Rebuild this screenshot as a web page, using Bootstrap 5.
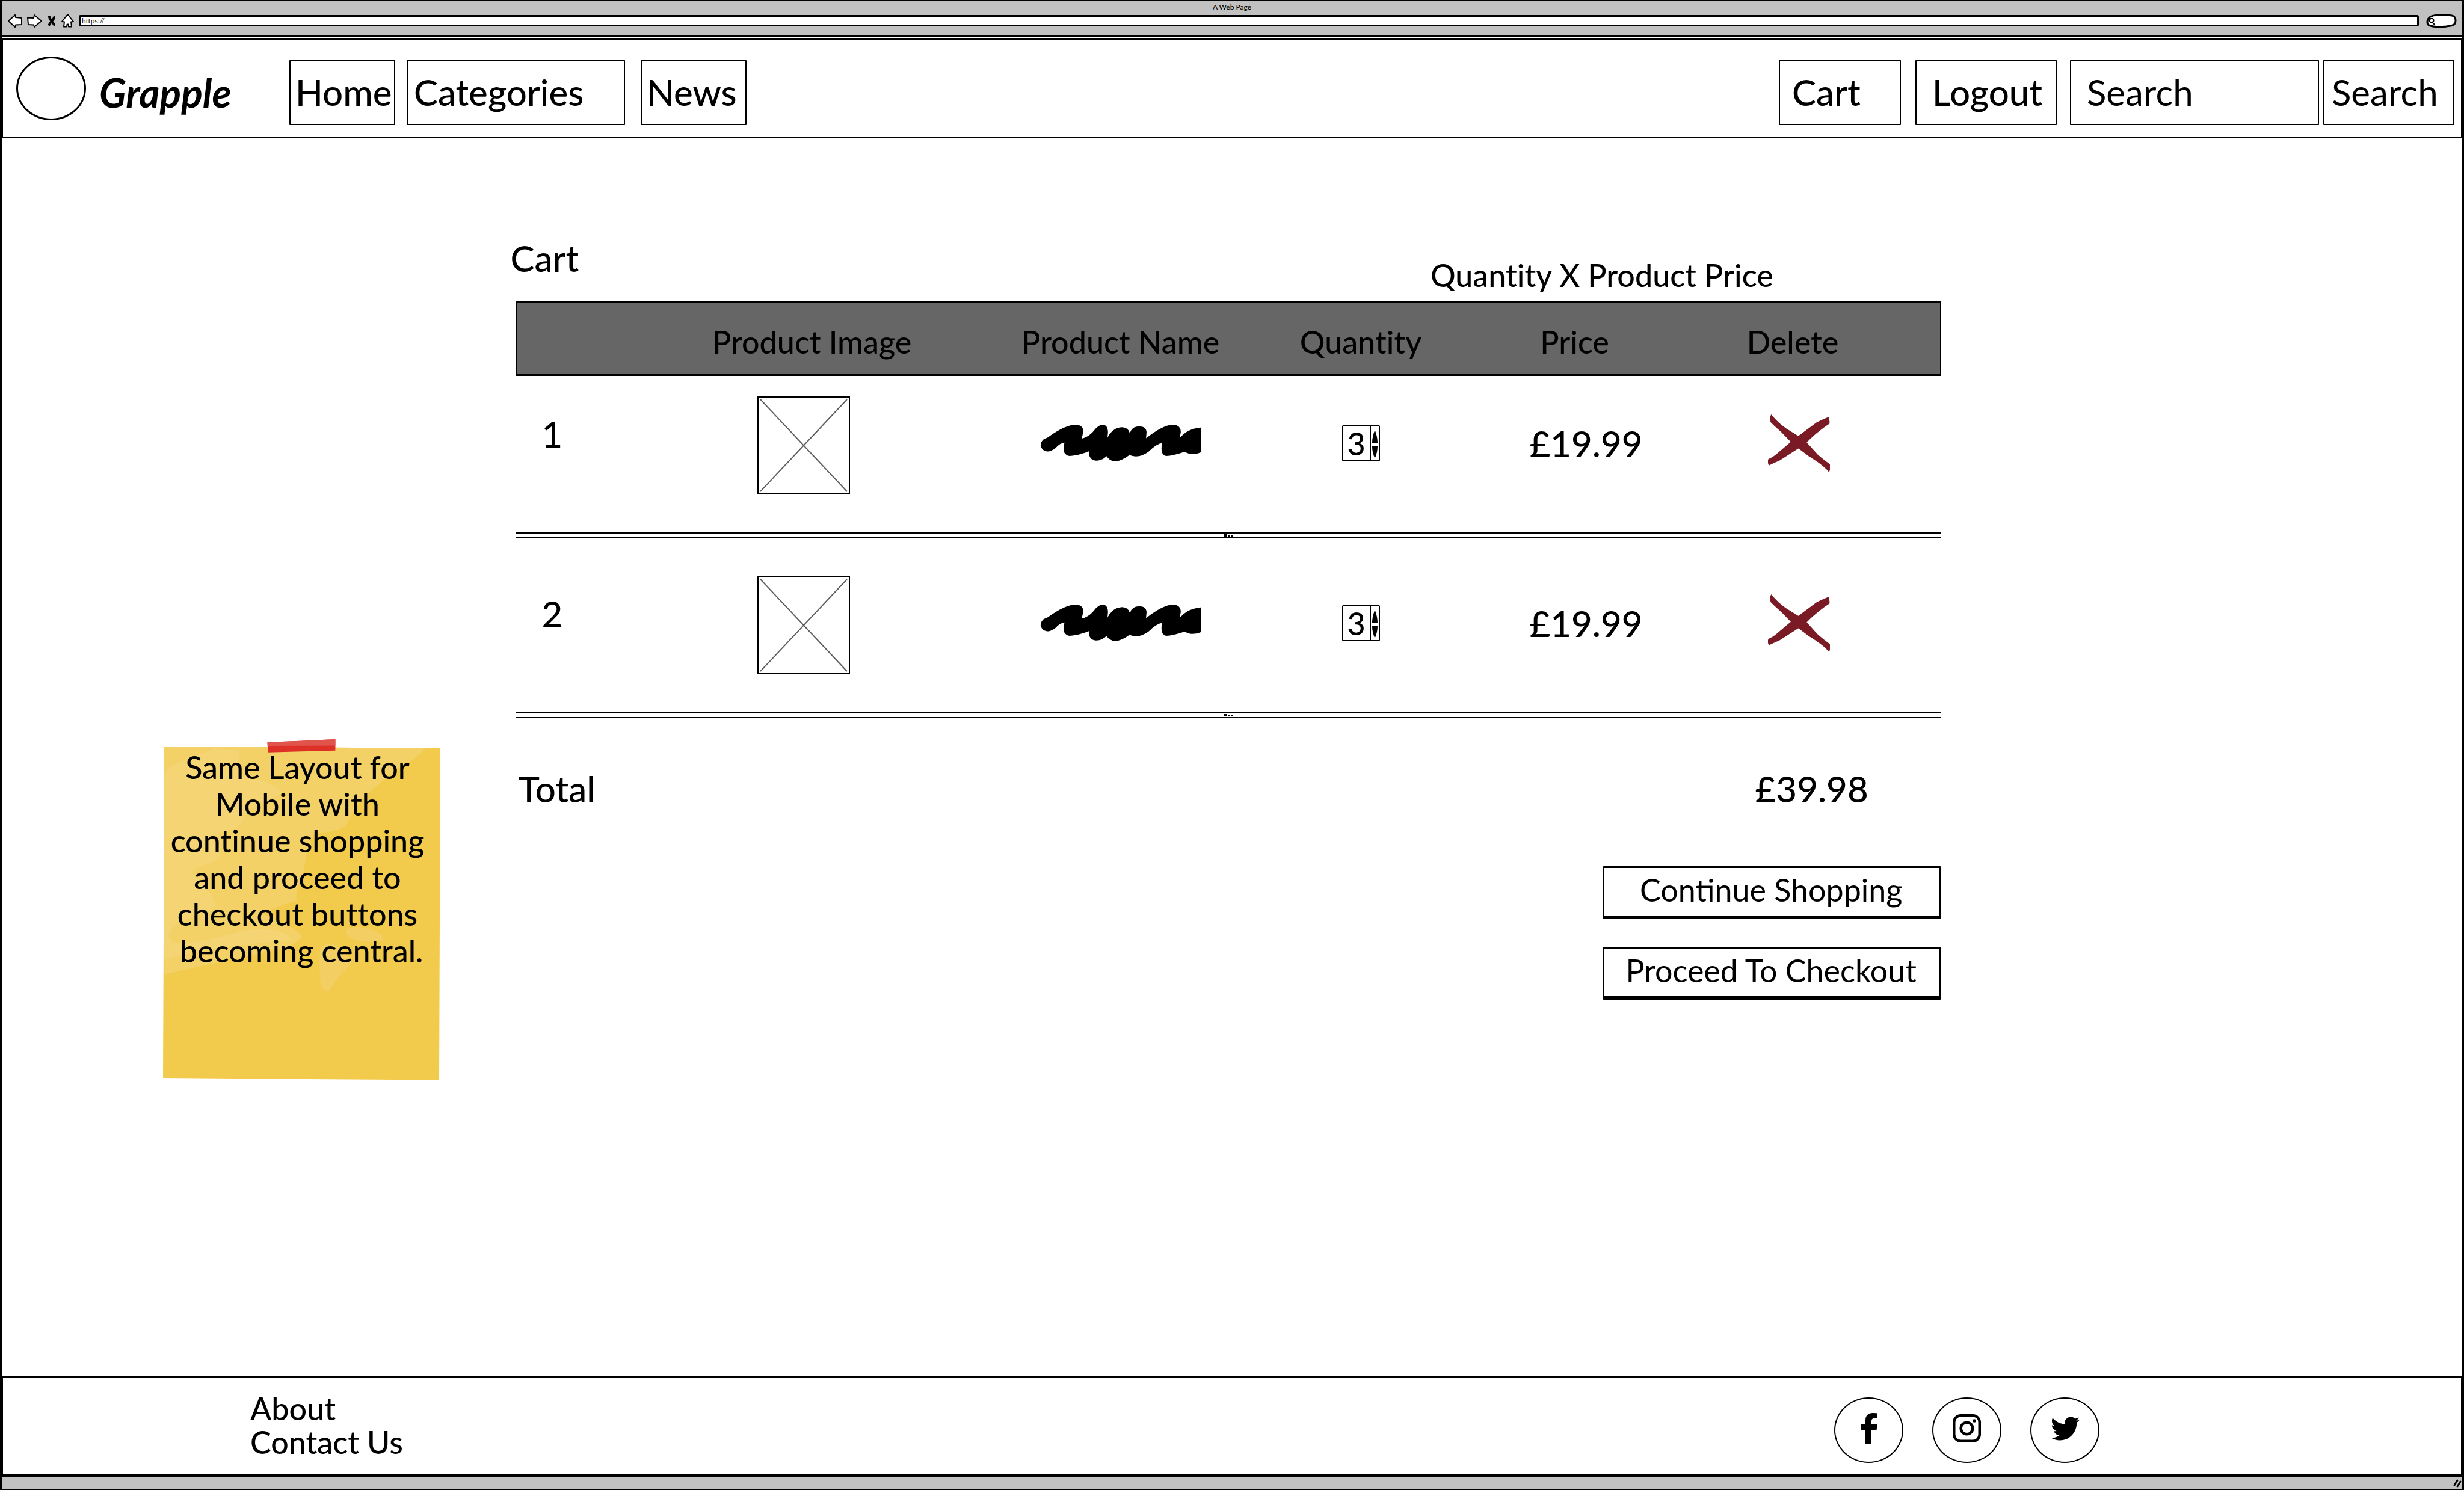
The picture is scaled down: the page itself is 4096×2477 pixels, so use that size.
<!DOCTYPE html>
<html lang="en">
<head>
<meta charset="utf-8">
<meta name="viewport" content="width=device-width, initial-scale=1">
<title>A Web Page</title>
<link href="https://cdn.jsdelivr.net/npm/bootstrap@5.3.0/dist/css/bootstrap.min.css" rel="stylesheet">
<style>
  :root { --ink: #000; --bar: #c1c1c1; --slate: #666; }
  body { font-family: Lato, "Open Sans", sans-serif; font-weight: 500; font-size: 52px; line-height: 60px; font-variant-ligatures: none; color: var(--ink); background: #fff; }
  a, a:hover { color: inherit; text-decoration: none; }
  .text-lg60 { font-size: 60px; line-height: 72px; font-weight: 500; }
  .frame { border: 3px solid var(--ink); border-width: 2px 3px; }

  /* browser window */
  .chrome-bar { background: var(--bar); border-bottom: 3px solid var(--ink); height: 60px; }
  .chrome-title { font-size: 12px; line-height: 18px; padding-top: 1px; }
  .chrome-tools { padding: 2px 8px 0 10px; }
  .tool-btn { padding: 0; border: 0; background: none; line-height: 0; }
  .url-box { height: 19px; border: 3px solid var(--ink); border-radius: 3px; padding: 0 2px; font-size: 12px; line-height: 13px; background: #fff; min-width: 0; }
  .status-bar { background: var(--bar); border-top: 4px solid var(--ink); height: 23px; }

  /* site header */
  .site-nav { border: 2px solid var(--ink); margin-top: 2px; padding: 33px 11px 19px 22px; }
  .brand { min-width: 454px; gap: 22px; padding: 0; }
  .brand-name { font-size: 66px; font-weight: 700; font-style: italic; }
  .brand-disc { width: 116px; height: 106px; margin: -5px 0 8px; border: 3px solid var(--ink); border-radius: 50%; }
  .nav-box { display: block; border: 2px solid var(--ink); border-radius: 2px; height: 109px; padding: 16px 10px 17px; background: #fff; color: var(--ink); text-align: left; }
  .box-sm { width: 176px; }
  .box-sm, .box-go { padding-left: 8px; padding-right: 0; }
  .box-cat { width: 363px; margin: 0 26px 0 19px; }
  .box-cart { width: 203px; padding-left: 20px; margin-right: 24px; }
  .box-logout { width: 235px; padding-left: 26px; margin-right: 22px; }
  .box-query { width: 414px; padding-left: 26px; margin-right: 7px; }
  .box-go { width: 218px; padding-left: 12px; }
  .box-query::placeholder { color: var(--ink); opacity: 1; }

  /* cart */
  .side-col { width: 20.87%; padding: 1000px 0 0 268px; }
  .cart-col { width: 57.95%; padding-top: 164px; }
  .cart-title { margin: 0 0 36px -8px; }
  .formula { margin: 0 279px 14px 0; }
  .cart-table { width: 100%; table-layout: fixed; border-collapse: separate; border-spacing: 0; }
  .cart-table th { font-weight: 500; text-align: center; background: var(--slate); border: solid var(--ink); border-width: 3px 0; padding: 34px 0 24px; }
  .cart-table th:first-child { border-left-width: 2px; }
  .cart-table th:last-child { border-right-width: 2px; padding-right: 98px; }
  .cart-table th:nth-child(2) { padding-left: 12px; }
  .item-row td { text-align: center; vertical-align: middle; padding: 63px 0 71px; }
  .item-row td:nth-child(2) { padding-bottom: 63px; }
  .first-row td { padding-top: 34px; }
  .item-row td:first-child { text-align: left; padding-left: 44px; }
  .item-row td:first-child div { padding-bottom: 32px; }
  .item-row td:nth-child(5) { padding-left: 38px; }
  .item-row td:last-child { padding-right: 78px; }
  .item-row svg, .item-row .tool-btn { display: block; margin: 0 auto; }
  .item-row .photo { margin-right: 190px; }
  .rule-row td { border: solid var(--ink); border-width: 2px 0; height: 10px; padding: 0; line-height: 0; }
  .rule-row svg { display: block; margin: 0 auto; }
  .stepper { display: flex; width: 63px; height: 60px; margin: 0 auto; border: 2px solid var(--ink); border-radius: 2px; }
  .stepper input { width: 46px; border: 0; border-right: 2px solid var(--ink); padding: 0; text-align: center; font-size: 52px; line-height: 50px; font-weight: 500; color: var(--ink); appearance: textfield; -moz-appearance: textfield; background: #fff; }
  .stepper input::-webkit-inner-spin-button { appearance: none; -webkit-appearance: none; margin: 0; }
  .total-row { padding: 81px 121px 0 5px; }
  .action-col { margin-top: 93px; gap: 46px; }
  .sketch-btn { width: 563px; height: 88px; padding: 6px 0 13px; background: #fff; color: var(--ink); border: solid var(--ink); border-width: 3px 4px 6px 2px; border-radius: 2px; }

  /* sticky note */
  .note { position: relative; width: 461px; height: 567px; padding: 16px 0 0; margin-right: -30px; text-align: center; line-height: 61px; }
  .note svg { position: absolute; inset: 0; width: 100%; height: 100%; }
  .note p { position: relative; margin: 0; padding-right: 14px; }

  /* footer */
  .site-foot { border: 2px solid var(--ink); padding: 23px 601px 18px 411px; }
  .foot-links { line-height: 56px; }
  .social { gap: 48px; padding-top: 10px; }
  .social a { width: 115px; height: 109px; border: 2px solid var(--ink); border-radius: 50%; padding-bottom: 6px; }
</style>
</head>
<body>
<div class="frame d-flex flex-column min-vh-100">

  <div class="chrome-bar d-flex flex-column">
    <div class="chrome-title text-center">A Web Page</div>
    <div class="chrome-tools d-flex align-items-center">
      <button type="button" class="tool-btn me-2" aria-label="Back"><svg width="24" height="22" viewBox="0 0 24 22" fill="#fff" stroke="#000" stroke-width="2" stroke-linejoin="round"><path d="M1 11 12 1l1 4 10 1v11l-10 .5L12 21z"/></svg></button>
      <button type="button" class="tool-btn me-2" aria-label="Forward"><svg width="25" height="22" viewBox="0 0 25 22" fill="#fff" stroke="#000" stroke-width="2" stroke-linejoin="round"><path d="M24 11 12 1l-1 5-10-.5L2 17l9 .5 1 3.500z"/></svg></button>
      <button type="button" class="tool-btn me-2" aria-label="Stop"><svg width="16" height="18" viewBox="0 0 16 18" fill="none" stroke="#000" stroke-width="4" stroke-linecap="round"><path d="M4 2c1 5 5 8 8 13M12 3C11 8 6 10 4 15"/></svg></button>
      <button type="button" class="tool-btn me-2" aria-label="Home"><svg width="21" height="23" viewBox="0 0 21 23" fill="#fff" stroke="#000" stroke-width="2" stroke-linejoin="round"><path d="M10.500 1 1 13l4 .5L4 21.500h5l.5-4 2 0 .5 4h5L16 13.500l4-.5z"/></svg></button>
      <input class="url-box flex-grow-1" type="text" value="https://" aria-label="Address">
      <svg class="ms-2" width="56" height="23" viewBox="0 0 56 23" fill="#fff" stroke="#000" stroke-width="3"><path d="M13 4c8-3 24-3 34-1 6 1 7 8 5 13-2 4-7 4-14 5-8 1-20 1-27-1C4 18 4 8 13 4z"/><path d="M12 8c5-1 6 5 2 6-5 1-6-5-2-6zM14 14l4 4" stroke-width="2"/></svg>
    </div>
  </div>

  <nav class="site-nav d-flex align-items-start text-lg60" aria-label="Main">
    <a href="#" class="brand d-flex align-items-center">
      <span class="brand-disc"></span>
      <span class="brand-name">Grapple</span>
    </a>
    <a href="#" class="nav-box box-sm">Home</a>
    <a href="#" class="nav-box box-cat">Categories</a>
    <a href="#" class="nav-box box-sm">News</a>
    <a href="#" class="nav-box box-cart ms-auto">Cart</a>
    <a href="#" class="nav-box box-logout">Logout</a>
    <form class="d-flex">
      <input class="nav-box box-query" type="text" placeholder="Search" aria-label="Search">
      <button class="nav-box box-go" type="button">Search</button>
    </form>
  </nav>

  <main class="d-flex flex-grow-1">
    <aside class="side-col">
      <div class="note">
        <svg viewBox="53 46 1421 1458" preserveAspectRatio="none" aria-hidden="true">
          <path fill="#f2cb4d" d="M60 77 1474 84 1468 1503 53 1494z"/>
          <path fill="#f3d167" d="M60 77 1398 84C1330 150 1270 150 1200 210C1100 280 1050 310 1000 400C970 440 890 445 830 445C780 510 790 560 770 620C730 700 730 720 742 738C680 745 640 765 560 790C640 830 740 850 764 888C750 910 730 915 720 925C600 960 200 1020 60 1053z"/>
          <path fill="#f5d474" d="M60 185C150 120 280 110 308 84L440 94C450 150 440 190 480 205C570 225 640 240 660 275C600 310 500 320 480 370C440 430 400 440 330 445C340 480 355 510 340 560C280 580 200 590 205 620C260 670 310 710 320 755C280 800 90 810 82 890C90 935 200 915 300 900C450 870 520 840 640 865C690 880 700 890 710 905C450 920 150 960 58 990z"/>
          <path fill="#f3cf63" d="M990 858C1060 835 1150 860 1180 890C1190 920 1110 915 1040 905C1000 890 985 880 990 858zM862 940C890 905 960 915 1020 1000C980 1040 940 1070 905 1120C880 1130 858 1110 857 1060C858 1010 850 980 862 940z"/>
          <path fill="#dd3128" d="M588 59 936 46V94L592 102z"/>
          <path fill="#e0544b" d="M588 59 936 46V73L588 74z"/>
        </svg>
        <p>Same Layout for<br>Mobile with<br>continue shopping<br>and proceed to<br>checkout buttons<br>&nbsp;becoming central.</p>
      </div>
    </aside>

    <section class="cart-col d-flex flex-column">
      <div class="d-flex justify-content-between align-items-end">
        <h1 class="cart-title text-lg60">Cart</h1>
        <p class="formula">Quantity X Product Price</p>
      </div>

      <table class="cart-table">
        <colgroup>
          <col style="width:9.600%"><col style="width:21.900%"><col style="width:21.900%"><col style="width:11.800%"><col style="width:18.200%"><col>
        </colgroup>
        <thead>
          <tr><th aria-label="Item"></th><th>Product Image</th><th>Product Name</th><th>Quantity</th><th>Price</th><th>Delete</th></tr>
        </thead>
        <tbody>
          <tr class="item-row first-row text-lg60">
            <td><div>1</div></td>
            <td><svg class="photo" width="154" height="163" viewBox="0 0 154 163" fill="none"><path d="M5 5 149 158M149 5 5 158" stroke="#5c5c5c" stroke-width="2"/><rect x="1" y="1" width="152" height="161" stroke="#000" stroke-width="2"/></svg></td>
            <td><svg class="scribble" width="267" height="61" viewBox="1113 966 329 182" preserveAspectRatio="none" role="img" aria-label="Product name"><path id="scrawl" d="M1114 1068Q1114 1040 1128 1030Q1165 966 1186 966Q1203 968 1201 1005Q1200 1020 1198 1035Q1213 1030 1227 985Q1235 966 1241 967Q1252 967 1252 1005L1251 1030Q1262 980 1281 979Q1294 980 1297 1010Q1300 975 1316 974Q1331 975 1331 1005L1330 1033Q1365 967 1385 966Q1402 968 1401 1005L1399 1032Q1415 985 1442 980V1103Q1425 1122 1409 1100Q1385 1120 1371 1121Q1358 1115 1363 1057Q1352 1060 1335 1100Q1315 1135 1296 1117Q1280 1145 1267 1148Q1255 1145 1249 1122Q1240 1145 1227 1144Q1212 1140 1213 1098Q1190 1120 1173 1121Q1156 1115 1163 1055Q1155 1055 1143 1085Q1133 1100 1127 1099Q1116 1095 1114 1068Z"/></svg></td>
            <td><span class="stepper"><input type="number" value="3" aria-label="Quantity of item 1"><svg width="13" height="56" viewBox="0 0 13 56"><path d="M6.500 6C9 12 11 20 11 27H2C2 20 4 12 6.500 6zM2 33h9c0 8-2 14-4.500 20C4 47 2 41 2 33z"/></svg></span></td>
            <td>£19.99</td>
            <td><button type="button" class="tool-btn" aria-label="Delete item 1"><svg width="103" height="96" viewBox="1113 875 136 296" preserveAspectRatio="none" fill="#7a1a24"><path id="cross-a" d="M1120 875Q1136 920 1152 945L1193 1005L1222 1080Q1234 1105 1249 1130Q1251 1150 1247 1171Q1235 1135 1203 1090L1169 1030L1142 965Q1125 930 1119 915Q1115 895 1120 875z"/><path id="cross-b" d="M1246 888Q1249 905 1248 922Q1217 970 1194 1028L1138 1112Q1125 1125 1115 1136Q1111 1120 1114 1103Q1122 1096 1129 1083L1169 1004L1220 915Q1235 898 1246 888z"/></svg></button></td>
          </tr>
          <tr class="rule-row"><td colspan="6"><svg width="14" height="4"><path d="M0 0h4v4H0zM6 1h3v3H6zM11 1h3v3h-3z"/></svg></td></tr>
          <tr class="item-row text-lg60">
            <td><div>2</div></td>
            <td><svg class="photo" width="154" height="163" viewBox="0 0 154 163" fill="none"><path d="M5 5 149 158M149 5 5 158" stroke="#5c5c5c" stroke-width="2"/><rect x="1" y="1" width="152" height="161" stroke="#000" stroke-width="2"/></svg></td>
            <td><svg class="scribble" width="267" height="61" viewBox="1113 966 329 182" preserveAspectRatio="none" role="img" aria-label="Product name"><use href="#scrawl"/></svg></td>
            <td><span class="stepper"><input type="number" value="3" aria-label="Quantity of item 2"><svg width="13" height="56" viewBox="0 0 13 56"><path d="M6.500 6C9 12 11 20 11 27H2C2 20 4 12 6.500 6zM2 33h9c0 8-2 14-4.500 20C4 47 2 41 2 33z"/></svg></span></td>
            <td>£19.99</td>
            <td><button type="button" class="tool-btn" aria-label="Delete item 2"><svg width="103" height="96" viewBox="1113 875 136 296" preserveAspectRatio="none" fill="#7a1a24"><use href="#cross-a"/><use href="#cross-b"/></svg></button></td>
          </tr>
          <tr class="rule-row"><td colspan="6"><svg width="14" height="4"><path d="M0 0h4v4H0zM6 1h3v3H6zM11 1h3v3h-3z"/></svg></td></tr>
        </tbody>
      </table>

      <div class="total-row d-flex justify-content-between text-lg60">
        <span>Total</span><span>£39.98</span>
      </div>
      <div class="action-col d-flex flex-column align-items-end">
        <button type="button" class="sketch-btn">Continue Shopping</button>
        <button type="button" class="sketch-btn">Proceed To Checkout</button>
      </div>
    </section>
  </main>

  <footer class="site-foot d-flex justify-content-between align-items-start">
    <div class="foot-links d-flex flex-column">
      <a href="#">About</a>
      <a href="#">Contact Us</a>
    </div>
    <div class="social d-flex">
      <a href="#" class="d-flex align-items-center justify-content-center" aria-label="Facebook"><svg width="28" height="51" viewBox="0 0 28 51"><path d="M28 .5V9h-5c-4 0-5 2-5 5v5h10l-1.500 9H18v23H8V28H0v-9h8v-7C8 4 13 0 20 0c4 0 6 .2 8 .5z"/></svg></a>
      <a href="#" class="d-flex align-items-center justify-content-center" aria-label="Instagram"><svg width="47" height="47" viewBox="0 0 47 47" fill="none" stroke="#000" stroke-width="4.500"><rect x="2.250" y="2.250" width="42.500" height="42.500" rx="11"/><circle cx="23.500" cy="23.500" r="9.800"/><circle cx="36" cy="11" r="2.800" fill="#000" stroke="none"/></svg></a>
      <a href="#" class="d-flex align-items-center justify-content-center" aria-label="Twitter"><svg width="48" height="40" viewBox="0 2 24 20"><path d="M23.950 4.570a10 10 0 0 1-2.820.78 4.960 4.960 0 0 0 2.160-2.730c-.95.56-2 .96-3.130 1.180a4.920 4.920 0 0 0-8.380 4.480C7.690 8.100 4.070 6.130 1.640 3.160a4.820 4.820 0 0 0-.67 2.480c0 1.710.87 3.210 2.190 4.100a4.900 4.900 0 0 1-2.230-.62v.06a4.920 4.920 0 0 0 3.950 4.830 5 5 0 0 1-2.210.08 4.940 4.940 0 0 0 4.600 3.420A9.870 9.870 0 0 1 0 19.540a13.990 13.990 0 0 0 7.550 2.210c9.050 0 14-7.500 14-13.980 0-.21 0-.42-.02-.63A9.940 9.940 0 0 0 24 4.590z"/></svg></a>
    </div>
  </footer>
  <div class="status-bar d-flex justify-content-end align-items-center"><svg width="16" height="16" viewBox="0 0 16 16" stroke="#000" stroke-width="3" stroke-linecap="round"><path d="M3 11 8 3M8 13 13 5"/></svg></div>
</div>
<script src="https://cdn.jsdelivr.net/npm/bootstrap@5.3.0/dist/js/bootstrap.bundle.min.js"></script>
</body>
</html>
